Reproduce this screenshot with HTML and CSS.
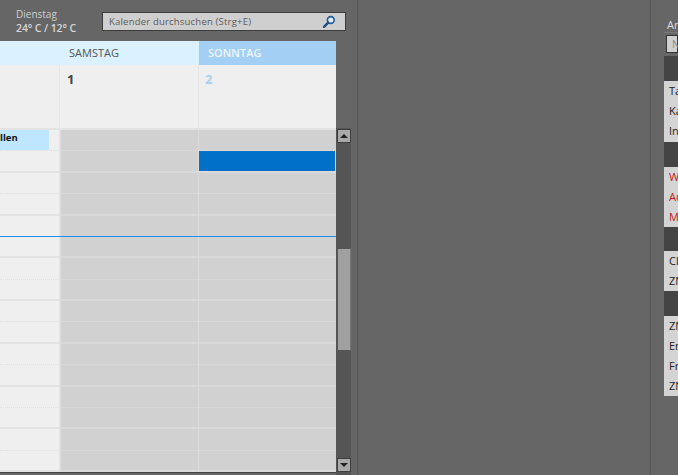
FILE: index.html
```html
<!DOCTYPE html>
<html lang="de">
<head>
<meta charset="utf-8">
<title>Kalender</title>
<link rel="stylesheet" href="styles.css">
</head>
<body>
<div class="app">
  <section class="calendar-pane">
    <header class="topbar">
      <div class="weather">
        <div class="weather-day">Dienstag</div>
        <div class="weather-temp">24° C / 12° C</div>
      </div>
      <div class="search">
        <span class="search-text">Kalender durchsuchen (Strg+E)</span>
        <svg class="search-icon" width="14" height="14" viewBox="0 0 14 14">
          <circle cx="8.8" cy="5" r="3.4" fill="#dfe9f2" stroke="#1d5a96" stroke-width="1.6"/>
          <path d="M6.2 7.6 L2 11.8" stroke="#1d4f86" stroke-width="2.4" stroke-linecap="round"/>
        </svg>
      </div>
    </header>
    <div class="cal-body">
      <div class="calendar">
        <div class="day-heads">
          <div class="day-head">SAMSTAG</div>
          <div class="day-head sunday">SONNTAG</div>
        </div>
        <div class="date-row">
          <div class="date-cell"></div>
          <div class="date-cell"><span class="date">1</span></div>
          <div class="date-cell"><span class="date date-sun">2</span></div>
        </div>
        <div class="grid">
          <div class="slot work half"><div class="chip">llen</div></div><div class="slot half"></div><div class="slot half"></div>
          <div class="slot work"></div><div class="slot"></div><div class="slot"><div class="event"></div></div>
          <div class="slot work half"></div><div class="slot half"></div><div class="slot half"></div>
          <div class="slot work"></div><div class="slot"></div><div class="slot"></div>
          <div class="slot work half"></div><div class="slot half"></div><div class="slot half"></div>
          <div class="slot work"></div><div class="slot"></div><div class="slot"></div>
          <div class="slot work half"></div><div class="slot half"></div><div class="slot half"></div>
          <div class="slot work"></div><div class="slot"></div><div class="slot"></div>
          <div class="slot work half"></div><div class="slot half"></div><div class="slot half"></div>
          <div class="slot work"></div><div class="slot"></div><div class="slot"></div>
          <div class="slot work half"></div><div class="slot half"></div><div class="slot half"></div>
          <div class="slot work"></div><div class="slot"></div><div class="slot"></div>
          <div class="slot work half"></div><div class="slot half"></div><div class="slot half"></div>
          <div class="slot work"></div><div class="slot"></div><div class="slot"></div>
          <div class="slot work half"></div><div class="slot half"></div><div class="slot half"></div>
          <div class="slot work"></div><div class="slot"></div><div class="slot"></div>
          <div class="now-line"></div>
        </div>
        <div class="grid-foot"></div>
      </div>
      <div class="scrollbar">
        <div class="scroll-btn"><span class="arrow-up"></span></div>
        <div class="scroll-track"><div class="scroll-thumb"></div></div>
        <div class="scroll-btn"><span class="arrow-down"></span></div>
      </div>
    </div>
  </section>
  <section class="middle-pane"></section>
  <aside class="side-pane">
    <div class="side-title">An</div>
    <div class="side-input">N</div>
    <div class="side-group"></div>
    <ul class="side-list side-list-first">
      <li>Ta</li><li>Ka</li><li>In</li>
    </ul>
    <div class="side-group"></div>
    <ul class="side-list red">
      <li>We</li><li>Au</li><li>Mi</li>
    </ul>
    <div class="side-group side-group-low"></div>
    <ul class="side-list">
      <li>Cl</li><li>ZN</li>
    </ul>
    <div class="side-group"></div>
    <ul class="side-list">
      <li>ZN</li><li>En</li><li>Fr</li><li>ZN</li>
    </ul>
  </aside>
</div>
</body>
</html>
```
FILE: styles.css
```css
* { box-sizing: border-box; }
html, body { margin: 0; padding: 0; height: 100%; overflow: hidden; }
body {
  background: #666;
  font-family: "Open Sans", "Noto Sans", "Liberation Sans", sans-serif;
  font-size: 10px;
}
.app { display: flex; width: 678px; height: 475px; overflow: hidden; }

.calendar-pane {
  width: 358px;
  flex: none;
  border-right: 1px solid #555;
  display: flex;
  flex-direction: column;
}
.topbar {
  height: 41px;
  flex: none;
  display: flex;
  align-items: flex-start;
  padding: 7px 11px 0 16px;
  justify-content: space-between;
}
.weather { color: #cfcfcf; width: 80px; }
.weather-day { font-size: 10px; line-height: 14px; }
.weather-temp { font-size: 10.5px; line-height: 14px; font-weight: 600; color: #d6d6d6; letter-spacing: -.1px; }
.search {
  width: 244px;
  height: 19px;
  margin-top: 5px;
  background: #cfcfcf;
  border: 1px solid #3c3c3c;
  display: flex;
  align-items: center;
  justify-content: space-between;
  padding: 0 9px 0 6px;
}
.search-text { color: #5c5c5c; font-size: 9.5px; letter-spacing: .2px; }
.search-icon { display: block; }

.cal-body { display: flex; flex: 1; min-height: 0; }
.calendar { width: 336px; flex: none; display: flex; flex-direction: column; }
.day-heads { display: grid; grid-template-columns: 199px 137px; height: 24px; }
.day-head {
  background: #dbf1ff;
  color: #555;
  font-size: 11px;
  line-height: 24px;
  padding-left: 69px;
}
.sunday { background: #a3cff5; color: #eef6fc; font-weight: 600; padding-left: 9px; }
.date-row {
  display: grid;
  grid-template-columns: 60px 139px 137px;
  height: 63px;
  background: #efefef;
}
.date-cell { border-right: 1px solid #e5e5e5; padding: 5px 0 0 7px; }
.date-cell:last-child { border-right: 0; padding-left: 6px; }
.date { font-size: 13px; font-weight: 700; color: #444; line-height: 18px; }
.date-sun { color: #a9d0f2; }

.grid {
  position: relative;
  display: grid;
  grid-template-columns: 60px 138px 138px;
  grid-template-rows: repeat(16, 1fr);
  height: 344px;
  border-top: 2px solid #e3e3e3;
}
.slot {
  background: #d1d1d1;
  border-left: 1px solid #dcdcdc;
  border-bottom: 2px solid #dadada;
  min-height: 0;
  position: relative;
}
.slot.half { border-bottom: 1px dotted #dedede; }
.slot.work { background: #efefef; border-left: 0; border-right: 1px solid #e5e5e5; }
.slot.work { border-bottom-color: #e3e3e3; }
.slot.work.half { border-bottom-color: #e0e0e0; }
.chip {
  width: 49px;
  height: 20px;
  background: #bfe6ff;
  color: #111;
  font-size: 9.5px;
  font-weight: 700;
  line-height: 15px;
}
.event { height: 20px; background: #0070c8; margin-right: 1px; }
.now-line {
  position: absolute;
  left: 0;
  right: 0;
  top: 106px;
  height: 1px;
  background: #1e90f0;
}
.grid-foot { height: 1px; background: #444; }

.scrollbar {
  width: 15px;
  flex: none;
  margin-top: 64px;
  padding: 24px 0 3px 1px;
  display: flex;
  flex-direction: column;
  background: linear-gradient(#666, #666) 0 0 / 100% 23px no-repeat, #555;
  height: 370px;
}
.scroll-btn {
  width: 14px;
  height: 14px;
  flex: none;
  background: #a9a9a9;
  border: 1px solid #3f3f3f;
  display: flex;
  align-items: center;
  justify-content: center;
}
.arrow-up, .arrow-down {
  width: 0;
  height: 0;
  border-left: 4px solid transparent;
  border-right: 4px solid transparent;
}
.arrow-up { border-bottom: 4px solid #222; }
.arrow-down { border-top: 4px solid #222; }
.scroll-track { flex: 1; position: relative; }
.scroll-thumb {
  position: absolute;
  left: 0;
  top: 105px;
  width: 14px;
  height: 103px;
  background: #a0a0a0;
  border: 1px solid #555;
  border-right-color: #777;
}

.middle-pane { width: 293px; flex: none; border-right: 1px solid #555; }
.side-pane { flex: 1; min-width: 0; padding-top: 18px; overflow: hidden; }
.side-title {
  color: #ddd;
  font-size: 11px;
  line-height: 14px;
  padding-left: 3px;
  border-bottom: 1px solid #777;
  margin-left: 13px;
  height: 15px;
}
.side-input {
  height: 18px;
  margin: 2px 0 3px 15px;
  background: #cfcfcf;
  border: 1px solid #333;
  color: #888;
  line-height: 16px;
  padding-left: 5px;
  font-size: 10px;
}
.side-group { height: 25px; background: #444; margin-left: 13px; }
.side-group-low { height: 24px; }
.side-list {
  list-style: none;
  margin: 0 0 0 13px;
  padding: 0;
  background: #d4d4d4;
  color: #222;
}
.side-list-first { padding-bottom: 1px; }
.side-list li { height: 20px; line-height: 20px; padding-left: 5px; font-size: 11px; white-space: nowrap; }
.side-list.red { color: #c4161c; }
```
